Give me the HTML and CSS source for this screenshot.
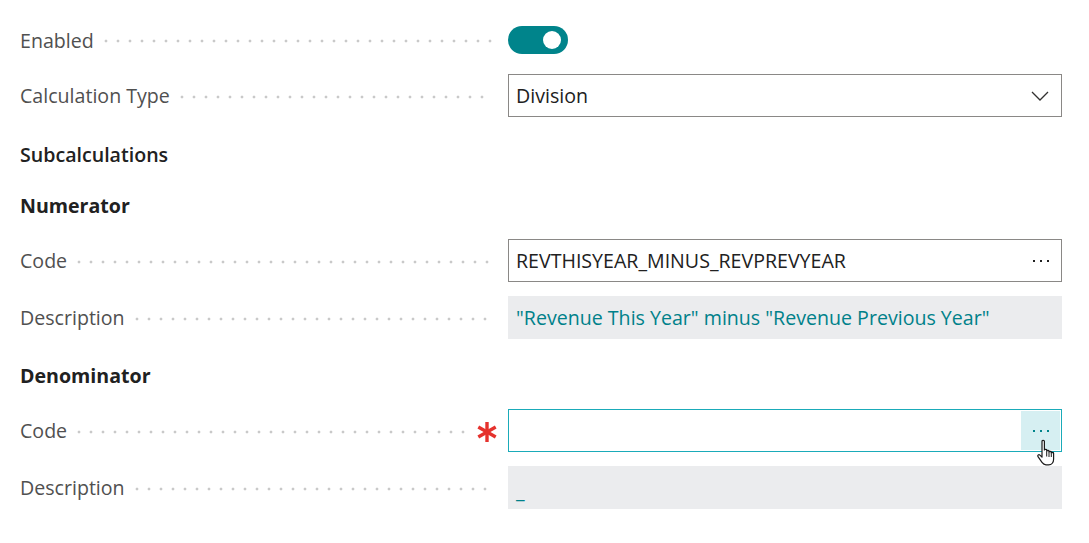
FILE: index.html
```html
<!DOCTYPE html>
<html lang="en">
<head>
<meta charset="utf-8">
<title>Calculation</title>
<link rel="stylesheet" href="styles.css">
</head>
<body>
<div class="form">
  <div class="row row-toggle">
    <div class="caption"><span class="label">Enabled</span><span class="leader"></span></div>
    <div class="field">
      <div class="toggle"><span class="knob"></span></div>
    </div>
  </div>

  <div class="row">
    <div class="caption"><span class="label">Calculation Type</span><span class="leader"></span></div>
    <div class="field">
      <div class="box select">
        <span class="value">Division</span>
        <svg class="chevron" width="18" height="10" viewBox="0 0 18 10"><path d="M1 1 L9 9 L17 1" fill="none" stroke="#323130" stroke-width="1.3"/></svg>
      </div>
    </div>
  </div>

  <div class="heading semi">Subcalculations</div>
  <div class="heading bold">Numerator</div>

  <div class="row after-heading">
    <div class="caption"><span class="label">Code</span><span class="leader"></span></div>
    <div class="field">
      <div class="box lookup">
        <span class="value">REVTHISYEAR_MINUS_REVPREVYEAR</span>
        <span class="more"><i></i><i></i><i></i></span>
      </div>
    </div>
  </div>

  <div class="row">
    <div class="caption"><span class="label">Description</span><span class="leader"></span></div>
    <div class="field">
      <div class="box readonly"><span class="value teal">"Revenue This Year" minus "Revenue Previous Year"</span></div>
    </div>
  </div>

  <div class="heading bold">Denominator</div>

  <div class="row after-heading">
    <div class="caption"><span class="label">Code</span><span class="leader"></span>
      <svg class="required" width="22" height="22" viewBox="0 0 22 22">
        <g stroke="#e5322d" stroke-width="3.4" stroke-linecap="butt">
          <line x1="11" y1="1" x2="11" y2="21"/>
          <line x1="2.3" y1="6" x2="19.7" y2="16"/>
          <line x1="2.3" y1="16" x2="19.7" y2="6"/>
        </g>
      </svg>
    </div>
    <div class="field">
      <div class="box lookup focused">
        <span class="value"></span>
        <span class="more hover"><i></i><i></i><i></i></span>
        <svg class="cursor" width="22" height="28" viewBox="0 0 22 28">
          <path d="M6 2.2c0-1.2 2.4-1.2 2.4 0V11c0-1 2.3-1 2.3 0v1.2c0-1 2.3-1 2.3 0v1c0-1 2.3-1 2.3 0v1c0-1 2.3-1 2.3 0v6c0 3-1.8 5.6-5 5.6H10c-2 0-3-1-4-2.4L2 17.6c-.9-1.3.8-2.6 1.9-1.5L6 18.2Z" fill="#fff" stroke="#1b1b1b" stroke-width="1.2" stroke-linejoin="round"/>
          <path d="M10.7 12.5v5M13 13.5v4.5M15.3 14.5v3.5" stroke="#1b1b1b" stroke-width="1"/>
        </svg>
      </div>
    </div>
  </div>

  <div class="row">
    <div class="caption"><span class="label">Description</span><span class="leader"></span></div>
    <div class="field">
      <div class="box readonly"><span class="value teal low">_</span></div>
    </div>
  </div>
</div>
</body>
</html>
```

FILE: styles.css
```css
* { box-sizing: border-box; }

html, body {
  margin: 0;
  padding: 0;
  background: #ffffff;
}

body {
  font-family: "Open Sans", "Noto Sans", "Liberation Sans", sans-serif;
  font-size: 19.6px;
  color: #212121;
}

.form {
  display: flex;
  flex-direction: column;
  padding: 20px 0 0 20px;
  width: 1062px;
}

.row {
  display: flex;
  align-items: center;
  height: 43px;
  margin-top: 14px;
}

.row-toggle {
  height: 40px;
  margin-top: 0;
}

.row.after-heading {
  margin-top: 19px;
}

.caption {
  width: 488px;
  flex: none;
  display: flex;
  align-items: center;
  height: 100%;
  padding-right: 16px;
}

.label {
  color: #505050;
  white-space: nowrap;
}

.leader {
  flex: 1;
  height: 4px;
  margin: 2px 0 0 6px;
  background-image: radial-gradient(circle at 6px 2px, #c9c9c9 1.2px, transparent 1.7px);
  background-size: 12px 4px;
  background-repeat: repeat-x;
}

.required {
  flex: none;
  margin-left: 8px;
  margin-right: -6px;
  margin-top: 2px;
}

.field {
  width: 554px;
  flex: none;
  height: 100%;
  display: flex;
  align-items: center;
}

.toggle {
  width: 60px;
  height: 28px;
  border-radius: 14px;
  background: #00848b;
  display: flex;
  align-items: center;
  justify-content: flex-end;
  padding-right: 7px;
}

.knob {
  width: 18px;
  height: 18px;
  border-radius: 50%;
  background: #ffffff;
}

.box {
  position: relative;
  width: 100%;
  height: 100%;
  display: flex;
  align-items: center;
  border: 1px solid #8a8886;
  background: #ffffff;
  padding-left: 7px;
}

.value {
  flex: 1;
  color: #212121;
  white-space: nowrap;
}

.chevron {
  margin-right: 12px;
  margin-top: 1px;
}

.more {
  display: flex;
  align-items: center;
  justify-content: center;
  gap: 5px;
  width: 40px;
  height: 100%;
}

.more i {
  width: 2px;
  height: 2px;
  background: #212121;
}

.box.focused {
  border-color: #1aabb9;
  padding-right: 1px;
}

.more.hover {
  background: #d6eff2;
  height: calc(100% - 2px);
  width: 39px;
}

.more.hover i {
  background: #00848b;
}

.cursor {
  position: absolute;
  right: 3px;
  top: 29px;
}

.readonly {
  border-color: #ebecee;
  background: #ebecee;
}

.teal {
  color: #00818a;
}

.low {
  margin-top: 6px;
}

.heading {
  height: 30px;
  display: flex;
  align-items: center;
  margin-top: 22px;
  color: #212121;
}

.heading.semi {
  font-weight: 600;
}

.heading.bold {
  font-weight: 700;
  margin-top: 21px;
}
```
